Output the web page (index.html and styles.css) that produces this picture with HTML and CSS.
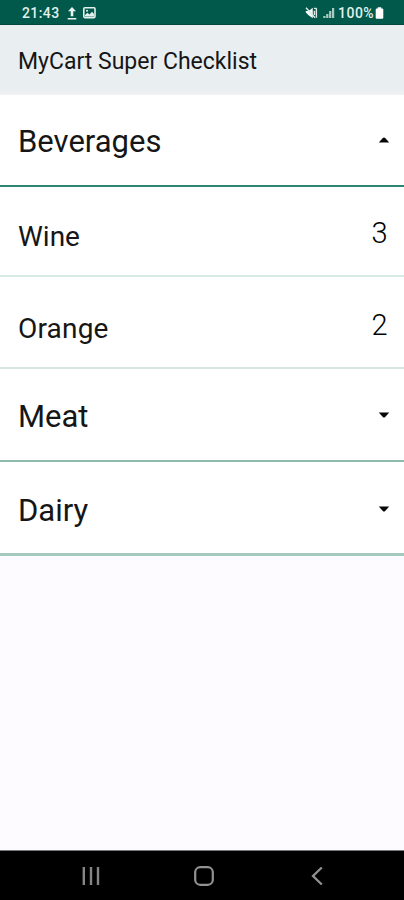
FILE: index.html
```html
<!DOCTYPE html>
<html lang="en">
<head>
<meta charset="utf-8">
<title>MyCart Super Checklist</title>
<link rel="stylesheet" href="styles.css">
</head>
<body>
<div class="phone">
  <div class="status">
    <span class="clock">21:43</span>
    <svg class="upload" width="10" height="13" viewBox="0 0 10 13"><path d="M5 0L9 4.3H6.3V9.3H3.7V4.3H1ZM0.7 11H9.3V12.4H0.7Z" fill="#e8f3f0"/></svg>
    <svg class="photo" width="13" height="12" viewBox="0 0 13 12"><rect x="0.8" y="0.8" width="11.2" height="9.8" rx="1" fill="none" stroke="#e3f0ec" stroke-width="1.6"/><path d="M2 9.5V8L4.5 5.8L6.5 7.4L9 4.8L11 7V9.5Z" fill="#e3f0ec"/><circle cx="4" cy="3.7" r="1" fill="#e3f0ec"/></svg>
    <span class="spacer"></span>
    <svg class="mute" width="13" height="12" viewBox="0 0 13 12"><path d="M0.8 4H3.5L7.8 0.8V11.2L3.5 8.2L0.8 5.5Z" fill="#f0f7f5"/><path d="M1 0.8L10 10.8M9.4 3.7V8M11.4 1.2V10.8M9 1.4H11.4" fill="none" stroke="#dcebe7" stroke-width="1.4"/></svg>
    <svg class="signal" width="12" height="12" viewBox="0 0 12 12"><path d="M0.3 9H2.5V11H0.3ZM3.2 7H5.4V11H3.2ZM6.1 4H8.3V11H6.1ZM9 1H11.2V11H9Z" fill="#a9cbc2"/></svg>
    <span class="charge">100%</span>
    <svg class="battery" width="9" height="12" viewBox="0 0 9 12"><path d="M2.7 0.3H6.3V1.5H7.3Q8.3 1.5 8.3 2.5V10.7Q8.3 11.7 7.3 11.7H1.7Q0.7 11.7 0.7 10.7V2.5Q0.7 1.5 1.7 1.5H2.7Z" fill="#fff"/></svg>
  </div>
  <header class="bar"><span class="title">MyCart Super Checklist</span></header>
  <main class="list">
    <div class="row group open"><span class="name">Beverages</span><svg class="arrow" width="12" height="6" viewBox="0 0 12 6"><path d="M0.8 5.5L4.8 1Q6 0 7.2 1L11.2 5.5Z" fill="#080808"/></svg></div>
    <div class="row item first"><span class="name">Wine</span><span class="count">3</span></div>
    <div class="row item last"><span class="name orange">Orange</span><span class="count">2</span></div>
    <div class="row group meat"><span class="name">Meat</span><svg class="arrow" width="12" height="6" viewBox="0 0 12 6"><path d="M0.8 0.5L4.8 5Q6 6 7.2 5L11.2 0.5Z" fill="#080808"/></svg></div>
    <div class="row group dairy"><span class="name">Dairy</span><svg class="arrow" width="12" height="6" viewBox="0 0 12 6"><path d="M0.8 0.5L4.8 5Q6 6 7.2 5L11.2 0.5Z" fill="#080808"/></svg></div>
  </main>
  <nav class="nav">
    <svg width="18" height="20" viewBox="0 0 18 20"><path d="M1.8 1V19M9 1V19M16 1V19" stroke="#858585" stroke-width="2.4"/></svg>
    <svg class="home" width="20" height="20" viewBox="0 0 20 20"><rect x="1.2" y="1.2" width="17.6" height="17.6" rx="5" fill="none" stroke="#929292" stroke-width="2.2"/></svg>
    <svg width="12" height="20" viewBox="0 0 12 20"><path d="M10.8 1.5L2 10L10.8 18.5" fill="none" stroke="#929292" stroke-width="2.3"/></svg>
  </nav>
</div>
</body>
</html>
```
FILE: styles.css
```css
* { box-sizing: border-box; }
body { margin: 0; font-family: Roboto, sans-serif; color: #161616; }
svg { display: block; flex: none; }
.phone { width: 404px; height: 900px; display: flex; flex-direction: column; background: #fdfbff; overflow: hidden; }
.status { height: 25px; flex: none; display: flex; align-items: center; padding: 2px 20px 0 22px; background: #00594a; border-bottom: 1px solid #00483c; color: #e3f0ec; font-size: 14px; line-height: 18px; }
.clock { width: 37px; letter-spacing: 0.4px; font-weight: 500; }
.upload { margin-left: 8px; }
.photo { margin-left: 6px; }
.spacer { flex: 1; }
.mute { margin-right: 1px; }
.signal { margin-left: 4px; }
.charge { margin-left: 3px; width: 37px; letter-spacing: 0.5px; font-weight: 500; }
.bar { height: 70px; flex: none; padding: 22px 18px 0; background: linear-gradient(#e9eef1 0, #e9eef1 64px, #f1f3f5 70px); }
.title { display: block; font-size: 23px; line-height: 30px; white-space: nowrap; }
.list { flex: 1; }
.row { display: flex; justify-content: space-between; background: #fff; padding: 0 14.5px 0 18px; }
.name { line-height: 40px; }
.group .name { font-size: 31px; }
.item .name { font-size: 28px; }
.item .orange { letter-spacing: 0.2px; }
.open { height: 92px; padding-top: 27px; border-bottom: 2px solid #2c8475; }
.first { height: 90px; padding-top: 30px; border-bottom: 2px solid #d9ebe6; }
.last { height: 92px; padding-top: 32px; border-bottom: 2px solid #d6e6e2; }
.meat { height: 93px; padding-top: 28px; border-bottom: 2px solid #90baad; }
.dairy { height: 94px; padding-top: 29px; border-bottom: 3px solid #a6c9be; }
.arrow { margin-top: 15px; }
.count { font-size: 29px; line-height: 32px; font-weight: 300; margin-right: 2px; color: #000; }
.nav { height: 50px; flex: none; display: flex; justify-content: space-between; align-items: center; padding: 0 81px 0 82px; background: #000; border-top: 1px solid #777; }
.home { margin-right: 4px; }
```
